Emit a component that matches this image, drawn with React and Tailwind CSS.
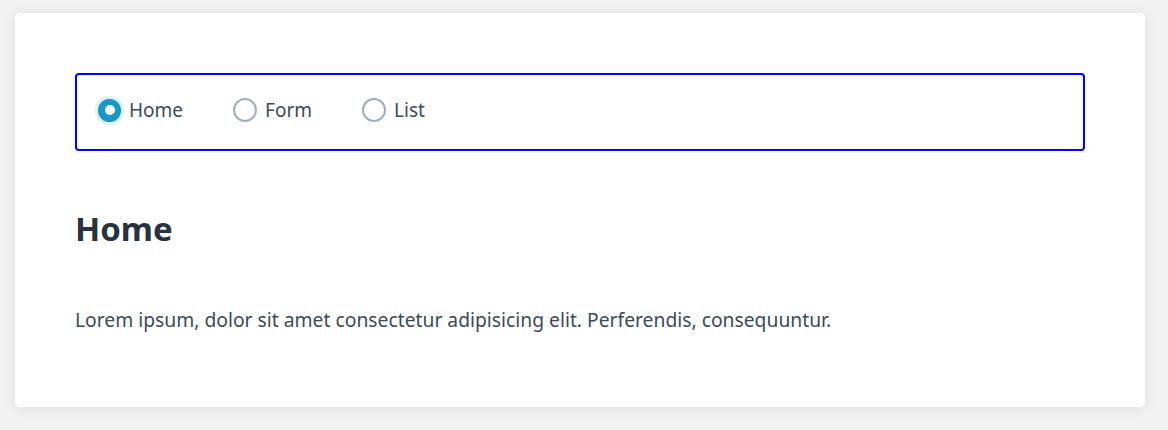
import React, { useState } from 'react';

const font = { fontFamily: '"Noto Sans", "Open Sans", sans-serif' };

function Radio({ label, checked, onSelect }) {
  return (
    <label className="flex cursor-pointer items-center gap-[8px]" onClick={onSelect}>
      <span
        className={
          checked
            ? 'flex h-[23px] w-[23px] items-center justify-center rounded-full bg-[#1997c6] ring-[3px] ring-[#dcf0f7]'
            : 'h-[24px] w-[24px] rounded-full border-2 border-[#a3adb8] bg-white'
        }
      >
        {checked && <span className="h-[10px] w-[10px] rounded-full bg-white" />}
      </span>
      <span className="text-[19px] leading-[1.5] text-[#3d4a58]">{label}</span>
    </label>
  );
}

export default function App() {
  const [view, setView] = useState('Home');
  return (
    <div className="min-h-[430px] bg-[#f1f1f1] pl-[15px] pt-[13px]" style={font}>
      <div className="h-[394px] w-[1130px] rounded-[5px] bg-white px-[60px] pt-[60px] shadow-[0_1px_14px_rgba(0,0,0,0.08)]">
        <div className="flex h-[78px] items-center gap-[50px] rounded-[4px] border-2 border-[#0000ff] pb-[4px] pl-[21px]">
          {['Home', 'Form', 'List'].map((v) => (
            <Radio key={v} label={v} checked={view === v} onSelect={() => setView(v)} />
          ))}
        </div>
        <h1 className="mt-[58px] text-[33px] font-bold leading-[1.2] text-[#27333f]">{view}</h1>
        <p className="mt-[57px] text-[19.3px] leading-[1.5] text-[#3d4a58]">
          Lorem ipsum, dolor sit amet consectetur adipisicing elit. Perferendis, consequuntur.
        </p>
      </div>
    </div>
  );
}
